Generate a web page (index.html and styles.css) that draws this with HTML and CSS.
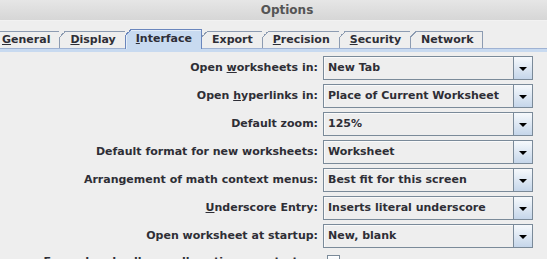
FILE: index.html
```html
<!DOCTYPE html>
<html lang="en">
<head>
    <meta charset="UTF-8">
    <title>Options</title>
    <link rel="stylesheet" href="styles.css">
</head>
<body>

<div class="titlebar">Options</div>

<div class="tabs">
    <div class="tab"><u>G</u>eneral</div>
    <div class="tab"><u>D</u>isplay</div>
    <div class="tab selected"><u>I</u>nterface</div>
    <div class="tab">Export</div>
    <div class="tab"><u>P</u>recision</div>
    <div class="tab"><u>S</u>ecurity</div>
    <div class="tab">Network</div>
</div>
<div class="tab-band"></div>

<div class="form">
    <label class="label">Open <u>w</u>orksheets in:</label>
    <div class="combo"><span class="value">New Tab</span><span class="arrow"></span></div>

    <label class="label">Open <u>h</u>yperlinks in:</label>
    <div class="combo"><span class="value">Place of Current Worksheet</span><span class="arrow"></span></div>

    <label class="label">Default zoom:</label>
    <div class="combo"><span class="value">125%</span><span class="arrow"></span></div>

    <label class="label">Default format for new worksheets:</label>
    <div class="combo"><span class="value">Worksheet</span><span class="arrow"></span></div>

    <label class="label">Arrangement of math context menus:</label>
    <div class="combo"><span class="value">Best fit for this screen</span><span class="arrow"></span></div>

    <label class="label"><u>U</u>nderscore Entry:</label>
    <div class="combo"><span class="value">Inserts literal underscore</span><span class="arrow"></span></div>

    <label class="label">Open worksheet at startup:</label>
    <div class="combo"><span class="value">New, blank</span><span class="arrow"></span></div>

    <label class="label check-label">Expand and collapse all sections on startup:</label>
    <div class="check-cell"><span class="checkbox"></span></div>
</div>

</body>
</html>
```

FILE: styles.css
```css
body {
    font-family: 'DejaVu Sans', sans-serif;
    font-size: 11px;
    font-weight: bold;
    color: #2e2e36;
    margin: 0;
    padding: 0;
    background-color: #eeeeee;
    height: 259px;
    overflow: hidden;
}

u {
    text-decoration: underline;
    text-underline-offset: 1px;
}

.titlebar {
    height: 20px;
    line-height: 20px;
    padding-left: 27px;
    text-align: center;
    font-size: 12px;
    color: #555;
    background: linear-gradient(#e6e6e6, #d6d6d6);
    border-bottom: 1px solid #f2f2f2;
}

.tabs {
    display: flex;
    align-items: flex-end;
    margin-top: 8px;
    margin-left: -9px;
    height: 19px;
}

.tab {
    position: relative;
    height: 16px;
    line-height: 16px;
    padding: 0 9px 0 10px;
    border: 1px solid #8c9bb1;
    border-bottom: none;
    margin-right: -1px;
    white-space: nowrap;
}

.tab::before {
    content: "";
    position: absolute;
    top: -1px;
    left: -1px;
    width: 6px;
    height: 6px;
    background: linear-gradient(135deg, #eeeeee 0 50%, #8c9bb1 50% calc(50% + 1px), transparent calc(50% + 1px));
}

.tab.selected {
    height: 19px;
    line-height: 17px;
    margin-bottom: -1px;
    z-index: 1;
    background-color: #c8daf0;
    border-color: #6a86bd;
    box-shadow: inset 1px 1px #e4edf8;
}

.tab.selected::before {
    background: linear-gradient(135deg, #eeeeee 0 50%, #6a86bd 50% calc(50% + 1px), transparent calc(50% + 1px));
}

.tab-band {
    height: 3px;
    border-top: 1px solid #9fb2d3;
    background-color: #c8daf0;
}

.form {
    display: grid;
    grid-template-columns: 1fr 210px;
    grid-auto-rows: 24px;
    column-gap: 5px;
    row-gap: 4px;
    margin-top: 4px;
    margin-right: 14px;
}

.label {
    text-align: right;
    line-height: 24px;
    white-space: nowrap;
}

.label.check-label {
    line-height: 20px;
}

.combo {
    display: flex;
    height: 24px;
    box-sizing: border-box;
    border: 1px solid #7a8a99;
}

.combo .value {
    flex: 1;
    padding-left: 4px;
    line-height: 22px;
    box-shadow: inset 1px 1px #fafafa;
    white-space: nowrap;
    overflow: hidden;
}

.combo .arrow {
    width: 18px;
    border-left: 1px solid #7a8a99;
    background: linear-gradient(#f6f9fc, #c5d6ea);
    display: flex;
    align-items: center;
    justify-content: center;
}

.combo .arrow::after {
    content: "";
    border-left: 4px solid transparent;
    border-right: 4px solid transparent;
    border-top: 4px solid #000;
    margin-top: 1px;
}

.check-cell {
    padding: 3px 0 0 4px;
}

.checkbox {
    display: block;
    width: 11px;
    height: 11px;
    border: 1px solid #7a8a99;
    background: linear-gradient(#ffffff, #dde6f0);
}
```
